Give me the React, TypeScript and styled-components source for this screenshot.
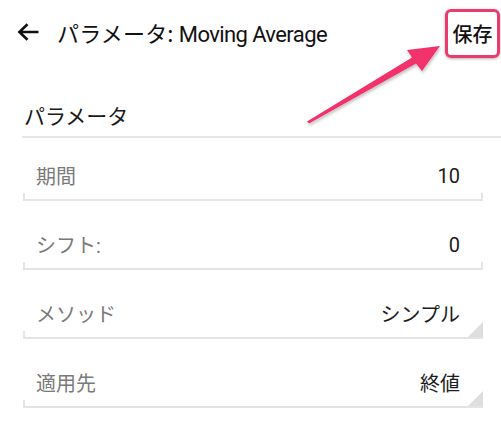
import React from "react";
import styled, { createGlobalStyle } from "styled-components";

const GlobalStyle = createGlobalStyle`
  html, body {
    margin: 0;
    padding: 0;
    background: #ffffff;
  }
  body {
    width: 501px;
    height: 421px;
    overflow: hidden;
    font-family: Roboto, "Noto Sans CJK JP", sans-serif;
  }
`;

interface IField {
  label: string;
  value: string;
  kind: "text" | "select";
}

const fields: IField[] = [
  { label: "期間", value: "10", kind: "text" },
  { label: "シフト:", value: "0", kind: "text" },
  { label: "メソッド", value: "シンプル", kind: "select" },
  { label: "適用先", value: "終値", kind: "select" },
];

const BackIcon: React.FC = () => (
  <svg width="22" height="18" viewBox="0 0 22 18" fill="none">
    <path
      d="M21.5 9H2.5 M10.5 1.2 L2.4 9 L10.5 16.8"
      stroke="#111"
      strokeWidth="2.6"
      strokeLinecap="butt"
      strokeLinejoin="miter"
    />
  </svg>
);

const PointerArrow: React.FC = () => (
  <ArrowLayer width="150" height="92" viewBox="0 0 150 92">
    <defs>
      <filter id="arrowShadow" x="-20%" y="-20%" width="140%" height="140%">
        <feDropShadow dx="1" dy="2" stdDeviation="1.6" floodColor="#000" floodOpacity="0.25" />
      </filter>
    </defs>
    <polygon
      points="7,83.5 112,19.5 107,12 140,8 122,33 116,25.5 9,85.5"
      fill="#f2306b"
      filter="url(#arrowShadow)"
    />
  </ArrowLayer>
);

export default function App() {
  return (
    <>
      <GlobalStyle />
      <Screen>
        <Header>
          <BackButton>
            <BackIcon />
          </BackButton>
          <Title>
            パラメータ: <Latin>Moving Average</Latin>
          </Title>
          <SaveButton>保存</SaveButton>
        </Header>

        <SectionTitle>パラメータ</SectionTitle>

        <FieldList>
          {fields.map((f) => (
            <FieldRow key={f.label} kind={f.kind}>
              <FieldLabel>{f.label}</FieldLabel>
              <FieldValue>{f.value}</FieldValue>
            </FieldRow>
          ))}
        </FieldList>

        <PointerArrow />
      </Screen>
    </>
  );
}

const Screen = styled.div`
  position: relative;
  width: 501px;
  height: 421px;
  background: #fff;
`;

const Header = styled.div`
  display: flex;
  align-items: center;
  height: 68px;
  padding-left: 17px;
  box-sizing: border-box;
`;

const BackButton = styled.div`
  display: flex;
  align-items: center;
  width: 22px;
  height: 18px;
  margin-right: 18px;
  margin-top: -4px;
`;

const Title = styled.div`
  flex: 1;
  margin-top: -4px;
  font-family: "Noto Sans CJK JP", sans-serif;
  font-size: 22px;
  color: #111;
  white-space: nowrap;
  letter-spacing: 0.2px;
`;

const Latin = styled.span`
  font-family: Roboto, sans-serif;
  font-size: 22px;
  letter-spacing: -0.6px;
`;

const SaveButton = styled.div`
  display: flex;
  align-items: center;
  justify-content: center;
  width: 55px;
  height: 49px;
  margin-right: 1px;
  margin-top: -2px;
  box-sizing: border-box;
  border: 3px solid #ea3a6e;
  border-radius: 6px;
  box-shadow: 0 1px 3px rgba(0, 0, 0, 0.3);
  font-family: "Noto Sans CJK JP", sans-serif;
  font-size: 20px;
  font-weight: 500;
  color: #111;
`;

const SectionTitle = styled.div`
  margin-left: 22px;
  padding: 33px 0 7px 2px;
  line-height: 28px;
  font-family: "Noto Sans CJK JP", sans-serif;
  font-size: 21px;
  color: #1a1a1a;
  border-bottom: 2px solid #e6e6e6;
`;

const FieldList = styled.div`
  display: flex;
  flex-direction: column;
  gap: 20px;
  margin: 14px 18px 0 23px;
`;

const FieldRow = styled.div<{ kind: "text" | "select" }>`
  position: relative;
  display: flex;
  align-items: center;
  justify-content: space-between;
  height: 49px;
  box-sizing: border-box;
  padding: 0 23px 0 13px;
  border-bottom: 2px solid #e4e4e4;

  &::before {
    content: "";
    position: absolute;
    left: 0;
    bottom: 0;
    width: 2px;
    height: 6px;
    background: #e4e4e4;
  }

  &::after {
    content: "";
    position: absolute;
    right: 0;
    bottom: 0;
    ${({ kind }) =>
      kind === "select"
        ? `
      width: 0;
      height: 0;
      border-left: 15px solid transparent;
      border-bottom: 15px solid #dedede;
    `
        : `
      width: 2px;
      height: 6px;
      background: #e4e4e4;
    `}
  }
`;

const FieldLabel = styled.span`
  font-family: Roboto, "Noto Sans CJK JP", sans-serif;
  font-size: 20px;
  color: #7a7a7a;
`;

const FieldValue = styled.span`
  font-family: Roboto, "Noto Sans CJK JP", sans-serif;
  font-size: 20px;
  color: #1c1c1c;
`;

const ArrowLayer = styled.svg`
  position: absolute;
  left: 300px;
  top: 38px;
  overflow: visible;
`;
